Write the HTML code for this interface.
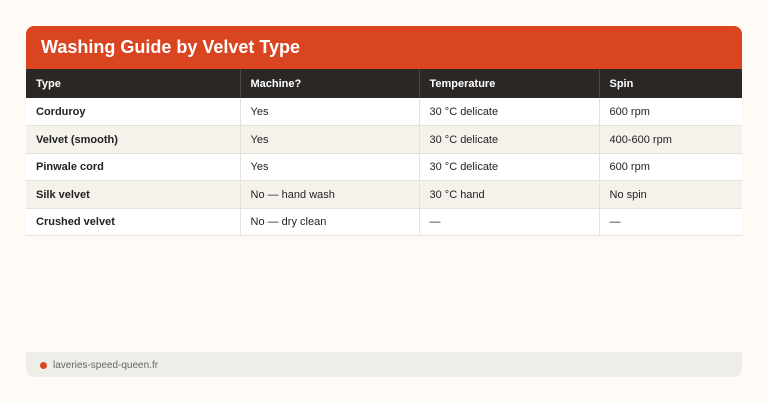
<!DOCTYPE html>
<html><head><style>
body{margin:0;width:768px;height:403px;background:#fefaf6;font-family:"Liberation Sans",sans-serif;position:relative;overflow:hidden}
.card{position:absolute;left:26px;top:26px;width:716px}
.h{background:#d84520;height:43px;border-radius:8px 8px 0 0;color:#fff;font-weight:bold;font-size:18px;line-height:43px;padding-left:15px;box-sizing:border-box}
table{border-collapse:collapse;width:716px;font-size:11px;table-layout:fixed}
th{background:#2a2725;color:#fff;text-align:left;font-weight:bold;height:29px;padding:0 0 0 10px;border-left:1px solid #4a4643}
td{height:26.5px;padding:1px 0 0 10px;box-sizing:border-box;color:#222;border-left:1px solid #e6e2db;border-bottom:1px solid #e6e2db}
tr td{height:27.5px}
th:first-child,td:first-child{border-left:none}
td:first-child{font-weight:bold}
tr:nth-child(odd) td{background:#f5f2ec}
tr:nth-child(even) td{background:#fff}
.f{position:absolute;left:26px;top:352px;width:716px;height:25px;background:#efede7;border-radius:0 0 8px 8px;font-size:10px;color:#666;line-height:27px}
.f i{position:absolute;left:14px;top:10px;width:7px;height:7px;border-radius:50%;background:#d84520}
.f span{position:absolute;left:27px}
</style></head><body>
<div class="card">
<div class="h">Washing Guide by Velvet Type</div>
<table>
<colgroup><col style="width:214px"><col style="width:179px"><col style="width:180px"><col style="width:143px"></colgroup>
<tr><th>Type</th><th>Machine?</th><th>Temperature</th><th>Spin</th></tr>
<tr><td>Corduroy</td><td>Yes</td><td>30 °C delicate</td><td>600 rpm</td></tr>
<tr><td>Velvet (smooth)</td><td>Yes</td><td>30 °C delicate</td><td>400-600 rpm</td></tr>
<tr><td>Pinwale cord</td><td>Yes</td><td>30 °C delicate</td><td>600 rpm</td></tr>
<tr><td>Silk velvet</td><td>No — hand wash</td><td>30 °C hand</td><td>No spin</td></tr>
<tr><td>Crushed velvet</td><td>No — dry clean</td><td>—</td><td>—</td></tr>
</table>
</div>
<div class="f"><i></i><span>laveries-speed-queen.fr</span></div>
</body></html>
